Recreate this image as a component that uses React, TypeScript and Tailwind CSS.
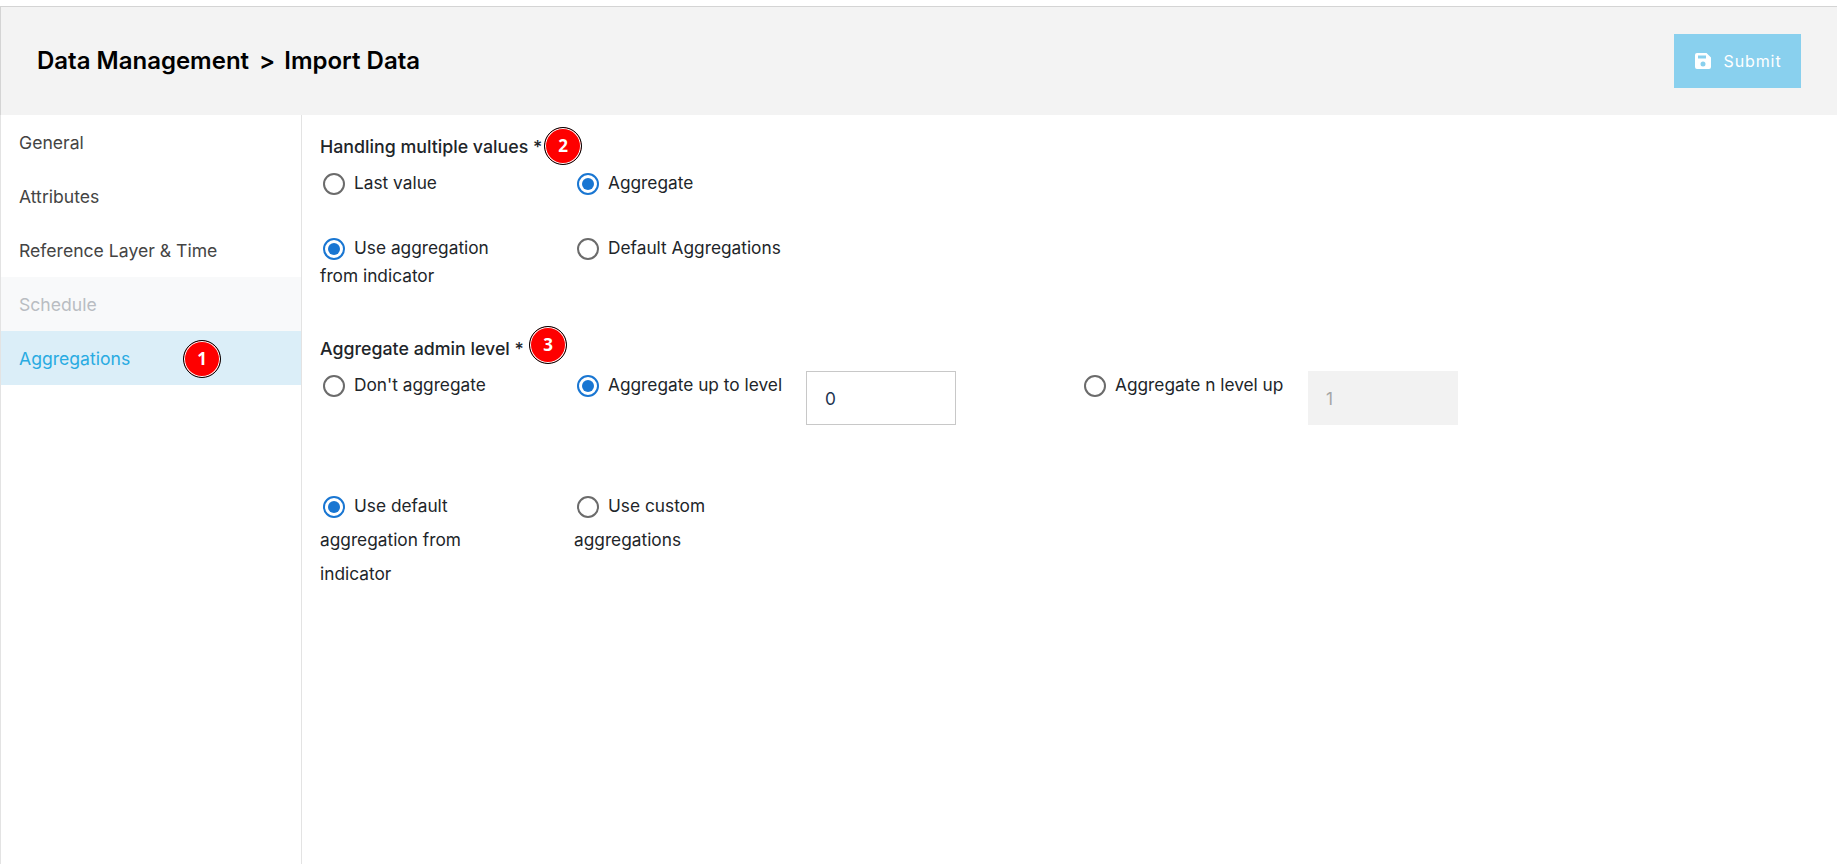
import React from "react";

const menu = [
  { label: "General" },
  { label: "Attributes" },
  { label: "Reference Layer & Time" },
  { label: "Schedule", disabled: true },
  { label: "Aggregations", active: true },
];

const Badge = ({ n, className }: { n: number; className: string }) => (
  <span
    className={`absolute flex h-[38px] w-[38px] items-center justify-center rounded-full border border-black bg-[#fe0000] text-[17px] leading-[24px] font-bold text-white shadow-[inset_0_0_0_1px_#fff] font-['Open_Sans',sans-serif] ${className}`}
  >
    {n}
  </span>
);

const Radio = ({ checked, label }: { checked?: boolean; label: string }) => (
  <>
    <span
      className={`mr-[9px] ml-[3px] inline-flex h-[22px] w-[22px] items-center justify-center rounded-full border-2 bg-white align-middle ${
        checked ? "border-[#1976d2]" : "border-[#6b6b6b]"
      }`}
    >
      {checked && <span className="h-[12px] w-[12px] rounded-full bg-[#1976d2]" />}
    </span>
    {label}
  </>
);

export default function App() {
  return (
    <div className="flex h-[864px] flex-col overflow-hidden bg-white pt-[6px] font-['Inter',sans-serif] text-[17.3px] text-[#212529]">
      <header className="flex h-[109px] shrink-0 items-center justify-between border-t border-l border-[#d4d4d4] bg-[#f3f3f3] pr-[36px] pl-[36px]">
        <h1 className="text-[24px] leading-[30px] font-semibold text-black">
          Data Management<span className="mr-[9px] ml-[10px]">&gt;</span>Import Data
        </h1>
        <button className="flex h-[54px] w-[127px] items-center justify-center gap-[12px] bg-[#89d0ee] pl-[2px] text-[16px] tracking-[0.9px] text-white">
          <svg width="16" height="16" viewBox="0 0 16 16" fill="#fff">
            <path
              fillRule="evenodd"
              d="M2 0h9.5L16 4.5V14a2 2 0 0 1-2 2H2a2 2 0 0 1-2-2V2a2 2 0 0 1 2-2zM3 2.5v3h8v-3H3zM8 8.5a2.5 2.5 0 1 0 0 5 2.5 2.5 0 0 0 0-5z"
            />
          </svg>
          Submit
        </button>
      </header>
      <div className="flex flex-1">
        <nav className="w-[302px] shrink-0 border-r border-l border-[#e3e3e3] text-[17.6px]">
          {menu.map((item) => (
            <div
              key={item.label}
              className={`relative flex h-[54px] items-center pt-[2px] pl-[18px] ${
                item.active
                  ? "bg-[#dbeef8] text-[#29abe2]"
                  : item.disabled
                    ? "bg-[#f8f9fa] text-[#b9bdc2]"
                    : "text-[#444]"
              }`}
            >
              {item.label}
              {item.active && <Badge n={1} className="top-[9px] left-[182px]" />}
            </div>
          ))}
        </nav>
        <main className="relative flex-1 pt-[20px] pl-[18px]">
          <div className="relative text-[17.8px] leading-[24px] font-medium">
            Handling multiple values *
            <Badge n={2} className="top-[-8px] left-[224px]" />
          </div>
          <div className="mt-[10px] flex leading-[28px]">
            <div className="w-[254px]"><Radio label="Last value" /></div>
            <div><Radio checked label="Aggregate" /></div>
          </div>
          <div className="mt-[37px] flex leading-[28px]">
            <div className="w-[254px]"><div className="w-[190px]"><Radio checked label="Use aggregation from indicator" /></div></div>
            <div><Radio label="Default Aggregations" /></div>
          </div>
          <div className="relative mt-[47px] text-[17.8px] leading-[24px] font-medium">
            Aggregate admin level *
            <Badge n={3} className="top-[-11px] left-[209px]" />
          </div>
          <div className="mt-[10px] flex h-[54px] leading-[28px]">
            <div className="w-[254px]"><Radio label="Don't aggregate" /></div>
            <div className="w-[232px]"><Radio checked label="Aggregate up to level" /></div>
            <input
              readOnly
              value="0"
              className="h-[54px] w-[150px] border border-[#c8c8c8] px-[18px] text-[#1c3350] outline-none"
            />
            <div className="ml-[125px] w-[227px]"><Radio label="Aggregate n level up" /></div>
            <input
              readOnly
              disabled
              value="1"
              className="h-[54px] w-[150px] bg-[#f2f2f2] px-[18px] text-[#a6a6a6] outline-none"
            />
          </div>
          <div className="mt-[64px] flex leading-[34px]">
            <div className="w-[254px]"><div className="w-[170px]"><Radio checked label="Use default aggregation from indicator" /></div></div>
            <div className="w-[150px]"><Radio label="Use custom aggregations" /></div>
          </div>
        </main>
      </div>
    </div>
  );
}
